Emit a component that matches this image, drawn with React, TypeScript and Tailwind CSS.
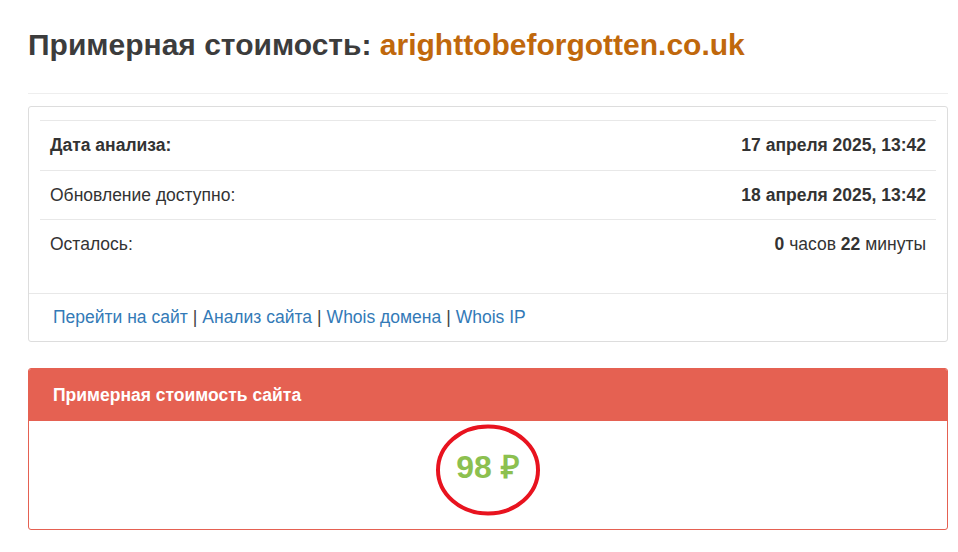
import React from "react";

const font = { fontFamily: '"Liberation Sans", Arial, sans-serif' };

function Row({ label, value, boldLabel }: { label: string; value: React.ReactNode; boldLabel?: boolean }) {
  return (
    <div className="flex items-center justify-between px-[10px] h-[49.5px] border-t border-[#e8e8e8]">
      <span className={boldLabel ? "font-bold" : ""}>{label}</span>
      <span>{value}</span>
    </div>
  );
}

export default function App() {
  return (
    <div className="bg-white text-[#333] text-[17.5px] min-h-[552px]" style={font}>
      <div className="ml-[28px] w-[920px] pt-[28px]">
        <h1 className="text-[30px] leading-[33px] font-bold text-[#3c3c3c]">
          Примерная стоимость: <span className="text-[#c0680c]">arighttobeforgotten.co.uk</span>
        </h1>
        <div className="mt-[32px] border-t border-[#eeeeee]" />
        <div className="mt-[12px] border border-[#dddddd] rounded-[3px]">
          <div className="px-[11px] pt-[13px] pb-[25px]">
            <Row label="Дата анализа:" boldLabel value={<b>17 апреля 2025, 13:42</b>} />
            <Row label="Обновление доступно:" value={<b>18 апреля 2025, 13:42</b>} />
            <div className="flex items-center justify-between px-[10px] h-[49px] border-t border-[#e8e8e8]">
              <span>Осталось:</span>
              <span>
                <b>0</b> часов <b>22</b> минуты
              </span>
            </div>
          </div>
          <div className="border-t border-[#e8e8e8] h-[48px] flex items-center pl-[24px] text-[#444]">
            <a className="text-[#337ab7]">Перейти на сайт</a>
            <span className="mx-[5px]">|</span>
            <a className="text-[#337ab7]">Анализ сайта</a>
            <span className="mx-[5px]">|</span>
            <a className="text-[#337ab7]">Whois домена</a>
            <span className="mx-[5px]">|</span>
            <a className="text-[#337ab7]">Whois IP</a>
          </div>
        </div>
        <div className="mt-[26px] border border-[#e56152] rounded-[3px] overflow-hidden">
          <div className="bg-[#e56152] h-[52px] flex items-center pl-[24px] text-white font-bold">
            Примерная стоимость сайта
          </div>
          <div className="relative flex justify-center pt-[28px] pb-[44px]">
            <span className="text-[32px] leading-[36px] font-bold text-[#8cc04f]">98 ₽</span>
            <svg
              className="absolute left-[406px] top-[3px]"
              width="106"
              height="92"
              viewBox="0 0 106 92"
            >
              <ellipse cx="53" cy="46" rx="50" ry="43.5" fill="none" stroke="#e8131f" strokeWidth="4" />
            </svg>
          </div>
        </div>
      </div>
    </div>
  );
}
